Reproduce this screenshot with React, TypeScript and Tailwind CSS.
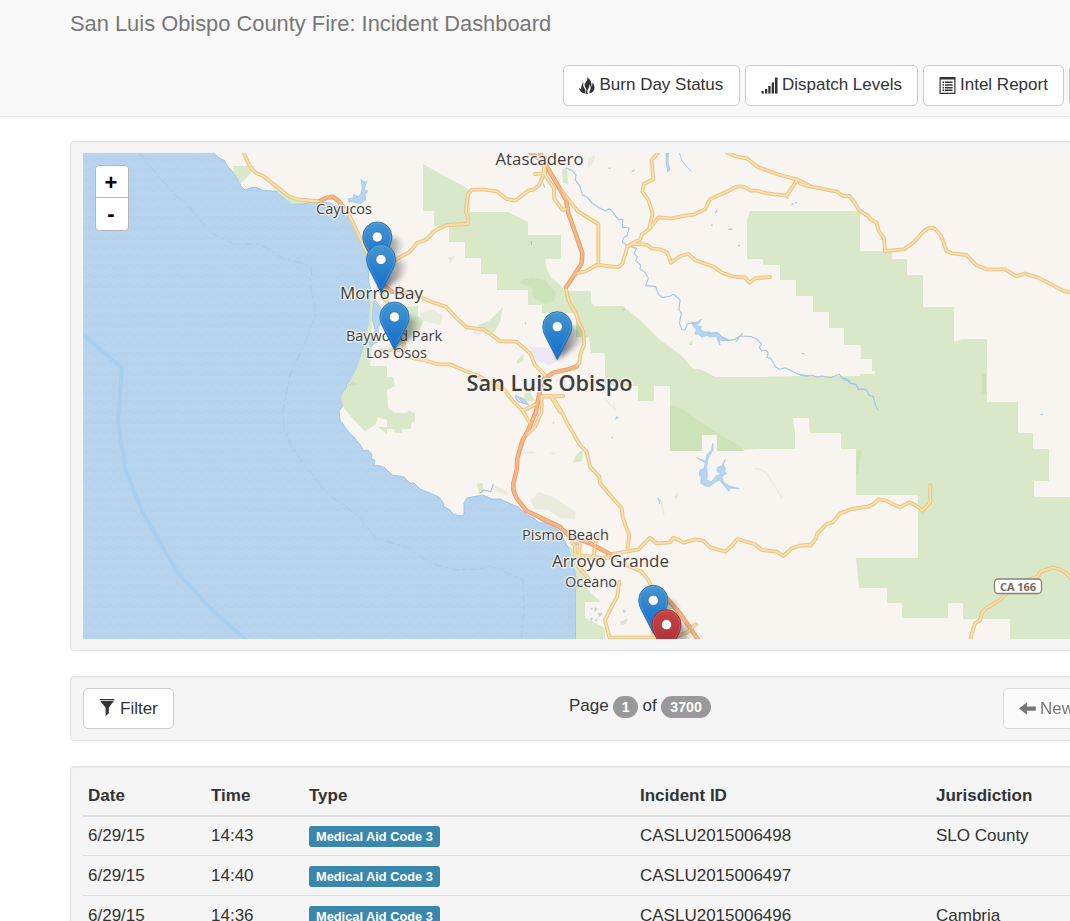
import React from 'react';

/* ---------- icons ---------- */

const FlameIcon = () => (
  <svg viewBox="0 0 17 17" className="h-[17px] w-[17px] shrink-0" fill="#333">
    <path d="M7.900 0C8.900 1.600 8.300 3 7.500 4.200 6.500 5.600 5.400 6.800 5.600 8.600 5.800 10.200 6.800 11 7.300 12.300 7.500 13.800 7.200 15.200 6.400 16.500 6.900 16.900 8.400 17 9.200 16.900 8.100 15.200 8 13.700 9 12.200 10.200 10.600 10.700 9.200 9.900 7.200 11.600 8.700 12.100 10.400 11.500 12.100 11 13.500 10 14.500 10.600 16.600 13.400 16 15.400 13.800 15.500 11 15.600 8.600 14.700 6.900 13 5.600 13.600 7.200 13.500 8.700 12.500 9.600 12.800 5.200 11.300 1.800 7.900 0Z" />
    <path d="M3.800 4.200C4.600 6 4.100 7.300 4.300 8.900 4.500 10.400 5.600 11.200 6.200 12.400 6.700 13.900 6.500 15.400 5.800 16.600 2.600 16 .3 14 0 11 .9 11.200 1.600 11.700 2.100 12.400 1.600 9.300 3.900 7.200 3.800 4.200Z" />
  </svg>
);

const SignalIcon = () => (
  <svg viewBox="0 0 17 17" className="h-[17px] w-[17px] shrink-0" fill="#333">
    <path d="M.5 14h2.300v2.500H.5zM4 12h2.300v4.500H4zM7.300 9h2.300v7.500H7.300zM10.700 5.500H13v11h-2.300zM14 .5h2.500v16H14z" />
  </svg>
);

const ListIcon = () => (
  <svg viewBox="0 0 17 17" className="h-[17px] w-[17px] shrink-0" fill="#333">
    <path fillRule="evenodd" d="M.5 0h16v17H.5zM1.700 2.500v13.300h13.600V2.500z" />
    <path d="M3.500 4.500H5V6H3.500zM6 4.500h7.500V6H6zM3.500 7.200H5v1.500H3.500zM6 7.200h7.500v1.500H6zM3.500 9.900H5v1.500H3.500zM6 9.900h7.500v1.500H6zM3.500 12.500H5V14H3.500zM6 12.500h7.500V14H6z" />
  </svg>
);

const FilterIcon = () => (
  <svg viewBox="0 0 17 17" className="-mt-[2px] h-[17px] w-[17px] shrink-0" fill="#333">
    <path d="M.8 0h14.500v1.200H.8zM1.200 2h13.700L9.800 8.500v5.800L6.600 17V8.500z" />
  </svg>
);

const ArrowIcon = () => (
  <svg viewBox="0 0 17 17" className="h-[17px] w-[17px] shrink-0" fill="#333">
    <path d="M0 8.500 8 2.300v4.100h8.800v4.300H8v4z" />
  </svg>
);

/* ---------- map data ---------- */

type TileKey = 'nw' | 'w' | 'n' | 'ne' | 'sw' | 's' | 'se';

const tiles: Record<TileKey, string> = {
  nw: 'translate(70 140) scale(.33333)',
  w: 'translate(300 140) scale(.33333)',
  n: 'translate(540 140) scale(.33333)',
  ne: 'translate(800 140) scale(.33333)',
  sw: 'translate(300 380) scale(.33333)',
  s: 'translate(540 380) scale(.33333)',
  se: 'translate(800 380) scale(.33333)',
};

type Road = [TileKey, string];

const roads: Road[] = [
  ['nw', 'M518 32 535 70 548 90 560 100 580 108 605 128 630 148 655 168 680 178 750 184'],
  ['w', 'M0 180 30 182 62 183'],
  ['w', 'M130 202 145 222 160 250 190 315 205 345'],
  ['w', 'M285 360 330 335 350 310 380 298 405 272 440 255 503 252 505 235 498 215 503 165 515 149 555 149 590 154 620 177 645 182 685 152 700 149 718 135 730 105 735 50'],
  ['w', 'M235 440 250 470 270 500M240 632 310 630 314 605'],
  ['w', 'M345 462 360 470 400 488 438 500 470 535 500 562 550 568 575 585 600 604 650 605 690 640 705 675 735 705 735 730'],
  ['w', 'M330 652 370 660 415 673 450 673 490 690 540 710 600 745'],
  ['n', 'M-15 102 15 100M15 80 15 105 42 145 42 175 68 210 85 205'],
  ['n', 'M22 80 60 145 90 185 115 215 175 252 175 372 135 395 108 400'],
  ['n', 'M175 375 235 382 248 370 262 320 285 305 300 300 305 285 330 265 355 232 395 235 430 228 460 224 495 208 510 178 550 160 590 140 610 140 635 152 650 152 680 160 740 167 770 122'],
  ['n', 'M560 38 590 50 620 55 655 82 720 105 770 118 810 138'],
  ['n', 'M355 38 335 60 340 118 312 132 307 155 325 180 338 220 328 265'],
  ['n', 'M275 312 320 314 335 325 360 328 380 337 387 350 393 368 420 348 445 342 465 360 520 380 545 398 580 410 615 412 628 428 645 415 690 411'],
  ['n', 'M78 445 85 480 92 495 110 525 115 545 130 575 132 615 122 640 118 670 100 685'],
  ['ne', 'M0 130 15 136 110 155 130 168 148 168 162 185 178 212 205 228 212 238 230 248 235 270 252 295 255 333 312 328 340 308 370 275 388 263 402 264 422 285 440 333 455 340 500 345 528 375 560 388 615 388 650 409 675 401 715 413 795 455 812 456'],
  ['se', 'M0 497 35 493 48 475 52 460 80 432 98 427 120 400 155 387 205 380 220 373 235 358 258 362 275 371 300 382 328 367 345 375 368 392 392 365 390 345 391 316'],
  ['se', 'M512 780 514 765 525 730 541 720 545 700 558 685 600 660 640 620 690 597 712 590 722 575 758 563 780 568 800 580 812 595'],
  ['s', 'M0 50 35 48 62 90 85 135 120 195 140 215 150 260 178 290 180 310 210 345 245 385 248 410 258 440 268 465 262 512'],
  ['s', 'M180 540 220 522 260 515 295 508 330 473 350 490 390 487 400 473 432 488 465 478 490 482 510 502 555 515 575 498 592 477 645 493 665 510 710 515 730 528 755 505 780 497 812 497'],
  ['s', 'M215 535 270 560 305 575 325 600 345 640'],
  ['s', 'M85 470 105 500 105 525 205 535M120 490 115 560 150 600M178 470 165 490 162 530'],
  ['s', 'M238 605 232 650 215 680 195 720 208 772 400 772 440 758 468 733'],
  ['sw', 'M592 10 610 25 640 65 668 92 690 130 685 160M668 92 710 72 720 50 790 48'],
  ['sw', 'M725 48 725 95 705 140 680 165M752 48 780 95'],
];

const highways: Road[] = [
  ['w', 'M60 183 80 173 98 170 115 182 130 202'],
  ['w', 'M250 435 275 455 340 462'],
  ['w', 'M692 38 725 62'],
  ['n', 'M0 38 20 80 50 130 78 180 85 220 110 290 127 340 125 370 105 402 78 442'],
  ['n', 'M110 680 85 688 40 698 10 718'],
  ['sw', 'M725 15 716 50 708 95 685 150 668 180 652 235 650 270 640 310 640 330 650 355 680 393 780 440'],
  ['s', 'M0 413 60 442 85 465 150 490 215 525'],
  ['s', 'M380 655 420 700 475 780'],
];

type Label = { x: number; y: number; text: string; size: number; width: number; bold?: boolean };

const labels: Label[] = [
  { x: 539.5, y: 164.500, text: 'Atascadero', size: 16.8, width: 88 },
  { x: 344, y: 214, text: 'Cayucos', size: 14.4, width: 56 },
  { x: 381.500, y: 299, text: 'Morro Bay', size: 16.8, width: 83 },
  { x: 394, y: 341, text: 'Baywood Park', size: 14.4, width: 96 },
  { x: 396.500, y: 357.500, text: 'Los Osos', size: 14.4, width: 61 },
  { x: 549.500, y: 391, text: 'San Luis Obispo', size: 22, width: 166, bold: true },
  { x: 565.500, y: 539.500, text: 'Pismo Beach', size: 14.4, width: 87 },
  { x: 610.500, y: 567, text: 'Arroyo Grande', size: 16.8, width: 117 },
  { x: 591, y: 587, text: 'Oceano', size: 14.4, width: 52 },
];

const Strokes = ({ items, className, width }: { items: Road[]; className: string; width: number }) => (
  <g fill="none" className={className} strokeWidth={width} strokeLinecap="round" strokeLinejoin="round">
    {items.map(([tile, d], i) => (
      <path key={i} transform={tiles[tile]} d={d} />
    ))}
  </g>
);

type Pin = { x: number; y: number; red?: boolean };

const pins: Pin[] = [
  { x: 377.3, y: 222 },
  { x: 381, y: 244.5 },
  { x: 394.5, y: 302 },
  { x: 557.3, y: 311.7 },
  { x: 653.3, y: 585.3 },
  { x: 666.5, y: 609.7, red: true },
];

const PinShadow = ({ x, y }: Pin) => (
  <path
    transform={`translate(${x} ${y})`}
    d="M0 48 2 18Q12 12 22 17Q28 22 19 34Z"
    fill="url(#shade)"
    filter="url(#soft)"
  />
);

const Marker = ({ x, y, red }: Pin) => (
  <g transform={`translate(${x} ${y})`}>
    <path
      d="M0 48-12.500 23.500C-14 20-14.500 17.500-14.500 14.500A14.500 14.500 0 0 1 14.500 14.500C14.500 17.500 14 20 12.500 23.500Z"
      fill={red ? 'url(#pinRed)' : 'url(#pinBlue)'}
      stroke={red ? '#982e35' : '#2e6fa6'}
      strokeWidth=".9"
    />
    <path
      d="M0 44-11.500 23C-13 20-13.400 17.500-13.400 14.500A13.400 13.400 0 0 1 13.400 14.500C13.400 17.500 13 20 11.500 23Z"
      fill="none"
      stroke="#fff"
      strokeOpacity=".13"
    />
    <circle cx="0" cy="15" r="5.100" fill="#fff" stroke={red ? '#982e35' : '#2e6fa6'} strokeWidth=".7" />
  </g>
);

const IncidentMap = () => (
  <svg
    viewBox="83 153 987 486"
    className="block h-[486px] w-[987px]"
    fontFamily="'Open Sans', 'Noto Sans', sans-serif"
  >
    <defs>
      <pattern id="waves" x="83" y="155" width="9.700" height="9.700" patternUnits="userSpaceOnUse">
        <path d="M0 4Q2.400 7 4.850 4T9.700 4" transform="translate(0 1)" fill="none" stroke="#a9cbea" strokeWidth="1" />
      </pattern>
      <linearGradient id="pinBlue" x1="0" y1="0" x2="0" y2="1">
        <stop offset="0" stopColor="#4597d0" />
        <stop offset="1" stopColor="#0e69cb" />
      </linearGradient>
      <linearGradient id="pinRed" x1="0" y1="0" x2="0" y2="1">
        <stop offset="0" stopColor="#c94444" />
        <stop offset="1" stopColor="#9f2832" />
      </linearGradient>
      <linearGradient id="shade" x1=".2" y1="0" x2="1" y2="0">
        <stop offset="0" stopColor="#222" stopOpacity=".6" />
        <stop offset="1" stopColor="#222" stopOpacity=".12" />
      </linearGradient>
      <filter id="soft" x="-40%" y="-40%" width="180%" height="180%">
        <feGaussianBlur stdDeviation="2.500" />
      </filter>
    </defs>

    <rect x="83" y="153" width="987" height="486" fill="#b7d4ee" />
    <rect x="83" y="153" width="987" height="486" fill="url(#waves)" opacity=".45" />
    <path d="M81 333 122 368 118 421 125 468 142 511 177 572 211 609 246 640" fill="none" stroke="#a9cff0" strokeWidth="4" strokeLinejoin="round" />
    <path
      d="M139 153 175 195 186 203 211 233 234 244 260 244 284 259 307 264 312 269 310 283 316 313 307 338 290 375 283 410 284 428 291 446 303 464 311 472 325 492 357 515 376 538 406 547 430 563 455 570 480 569 490 566 523 580 524 610 521 640"
      fill="none"
      stroke="#a3caec"
      strokeWidth="1"
      strokeOpacity=".85"
      strokeDasharray="9 3 3 3"
    />

    <path
      d="M214 145 214 153 219 158 224 160 228 167 232 171 238 179 241 186 245 190 250 188 255 187 262 190 272 191 280 191 290 201 293 204 303 204 310 202 320 202 330 203 340 208 347 214 352 223 357 232 362 245 366 252 368 268 369 283 371 290 372 310 369 325 365 340 362 352 358 365 352 378 347 384 346 390 344 393 341 395 343 401 342 407 339 411 340 420 345 427 350 434 354 437 361 446 363 451 368 450 372 455 371 459 375 460 374 465 380 466 385 468 392 475 404 477 410 483 414 483 420 489 432 494 439 497 444 504 443 506 450 510 453 514 460 516 464 515 464 503 467 498 472 497 483 495 492 499 500 499 511 504 518 507 527 515 534 518 539 523 549 523 560 532 565 542 571 552 575 568 576 590 576 605 576 620 575 650 1080 650 1080 145Z"
      fill="#f8f4f0"
      stroke="#98c1e6"
      strokeWidth=".9"
    />

    <g fill="#d8e8c8">
      <path d="M234 166H255L250 174 240 184 238 179 233 172ZM272 187 280 191 294 198 310 202 292 204Z" />
      <path d="M423 164 470 190V212H508L528 222V235H561V259H545L547 270 552 279 557 282 566 291H591V303L595 306H623L640 320 660 340 682 356 692 368 702 370 715 377H760L800 376H860V374H875V371H872V359H861V345H844V328H829V312H813V296H796V280H780V265H763V259H747V220L750 211H860V251H892V259H907V275H923V307H954V342L962 339H987V402H1018V433H1033V449H1049V481H1034V497H1070V639H1010V619H963V603H948V618H902V603H887V588H859L856 558H918V495H856V449H841V433H810L809 418H793L795 433V449L760 449 717 451V435H702V451H670V386H654V401H638V386H605V353H591L589 337H576V313H542V305H528V290H497V274H481V258H465V242H449V227H434V211H423Z" />
      <path d="M364 346 370 340 372 350 370 366H387V377H393L395 386 387 390 388 408 395 413H407L409 410 415 414V421L411 423V429H402V433H395L394 429H387V434L378 427H387V420L378 417 376 424 365 431 354 420 343 407 341 396 347 387 357 367Z" />
      <path d="M371 290H374V305L372 325 370 340 364 342 369 322ZM399 307 418 306V316L424 320 418 333 408 340 404 330ZM477 326 490 320 503 307 500 322 493 333ZM576 570 583 572 588 590 601 602H585V618L605 628V639H576ZM568 545 574 550 578 570 575 570ZM477 484 482 483 484 492 479 494ZM583 450 582 461 574 463 573 460 578 453ZM562 170 567 167 568 184 563 183ZM652 628 657 625 657 639 650 639ZM690 342 693 340 692 345 689 345ZM674 497 678 492 677 499ZM517 360 524 354 523 361 517 364ZM524 394 530 392 535 401 525 401ZM620 622 628 618 626 624 621 625Z" />
    </g>
    <g fill="#cce2b8">
      <path d="M520 283 522 280 532 278 545 280 556 293 554 301 545 303 536 300 532 293 533 289ZM670 405 682 409 712 430 740 446 744 451 717 451V435H702V451H670ZM856 451 862 450 860 460 858 475 856 475ZM982 374H986V393H982ZM576 322 588 338 576 337ZM347 386 352 381 360 385Z" />
    </g>
    <g fill="#e9ecdd">
      <path d="M530 500 534 497 538 492 548 495 555 498 562 503 576 512 575 519 560 518 548 510 535 509ZM494 485 508 492 507 496 492 489ZM420 313 433 309 443 316 440 325 421 320ZM448 257 455 256 450 265ZM522 453 533 451 535 454ZM588 158 595 155 594 162 588 168ZM549 453 556 452 554 455Z" />
    </g>
    <g fill="none" stroke="#e9eedc" strokeWidth="1.500">
      <path d="M755 469Q762 468 768 475L782 498M604 398 615 410 614 404M661 500 664 515" />
    </g>
    <g fill="#ece6f5">
      <path d="M530 347 551 348 558 360 550 365 540 362 532 356ZM474 329 482 330 480 335 473 334ZM555 380 564 377 566 386ZM698 636 704 633 702 639Z" />
    </g>

    <g fill="#b5d4f0" stroke="#a0c5ea" strokeWidth=".7">
      <path d="M361 179 364 182 367 181 364 190 368 191 365 195 366 199 361 204 354 202 349 202 348 199 353 198 354 194 358 197 361 193 362 188Z" />
      <path d="M374 298 378 304 384 312 381 322 378 330 381 340 374 344 371 347 369 344 375 330 372 318ZM515 395 524 399 529 405 523 403ZM576 542 580 544 574 546Z" />
      <path transform={tiles.s} strokeWidth="2" d="M518 190 520 208 510 225 503 240 500 262 502 285 500 300 515 306 528 288 542 282 530 273 533 262 545 258 556 238 550 255 558 265 552 275 560 280 545 290 552 308 568 318 598 326 570 324 566 334 555 320 538 300 518 312 508 320 495 318 482 310 484 290 477 285 480 270 492 265 496 248 470 233 497 243 500 225 515 210Z" />
      <path transform={tiles.n} strokeWidth="2" d="M455 545 468 548 485 537 478 550 465 556 485 560 480 568 495 576 510 575 506 580 532 580 540 588 550 592 565 598 548 603 538 598 540 615 533 600 530 588 512 592 500 586 485 592 475 582 464 582 470 570 460 560ZM378 38H386L384 65 390 90 383 95 378 70Z" />
      <path transform={tiles.s} d="M230 108 237 115 226 118ZM352 352 362 360 358 372ZM152 685 158 683 156 690ZM165 680 172 688 164 694ZM175 700 188 698 178 712ZM150 715 158 714 155 724ZM165 720 172 715 168 726ZM248 690 258 692 252 700Z" />
    </g>
    <g fill="none" stroke="#a3c7ea" strokeWidth="3.400" strokeLinejoin="round">
      <path transform={tiles.n} d="M78 83 98 92 108 105 106 120 120 140 127 165 140 170 155 188 175 202 198 213 207 205 220 218 235 240 248 237 247 262 267 264 262 285 250 295 247 307 262 315 272 320 290 325 282 340 292 350 287 362 302 375 300 388 315 397 325 415 317 437 347 440 354 460 365 472 385 470 402 463 420 480 417 510 424 520 418 550 425 568 435 570 442 552 470 548" />
      <path transform={tiles.n} d="M500 582 530 577 560 602 585 598 600 588 635 590 650 597 665 612 658 622 665 633 678 630 685 640 680 652 692 655 708 682 720 688 735 683 760 695 775 703 810 708M588 605 600 588 608 580" />
      <path transform={tiles.n} d="M418 38 425 60 440 80 455 95" strokeWidth="2.500" />
      <path transform={tiles.ne} d="M0 705 20 709 35 705 50 711 65 708 92 713 118 703 128 716 140 715 147 728 168 734 175 748 200 748" />
      <path transform={tiles.se} d="M130 0 148 2 152 10 168 14 177 28 193 27 202 34 207 46 220 50 225 72 235 92" />
      <path transform={tiles.sw} d="M540 340 550 330 572 335 580 312M540 340 545 334M645 50 655 65 680 72" />
      <path transform={tiles.n} d="M525 220 532 210M275 95 284 90M755 195 760 190M785 640 795 643M565 268 578 267M594 317 600 317M250 511 254 508M206 85 212 84M512 255 518 256M742 176 746 173M766 190 771 187" />
      <path transform={tiles.se} d="M722 104 728 103" />
      <path transform={tiles.s} d="M215 172 219 173M39 127 41 130" />
      <path transform={tiles.w} d="M694 303 695 315M676 548 677 552M730 130 734 143" />
    </g>

    <Strokes items={roads} className="stroke-[#e8c48c]" width={11.5} />
    <Strokes items={highways} className="stroke-[#e0a070]" width={13.5} />
    <Strokes items={roads} className="stroke-[#fae0a4]" width={5.5} />
    <Strokes items={highways} className="stroke-[#f9b680]" width={8} />

    <g textAnchor="middle" stroke="#f8f4f0" strokeOpacity=".9" strokeWidth="2.500" strokeLinejoin="round" paintOrder="stroke" fill="#3e3e40">
      {labels.map((l) => (
        <text
          key={l.text}
          x={l.x}
          y={l.y}
          fontSize={l.size}
          fontWeight={l.bold ? 600 : 400}
          textLength={l.width}
          lengthAdjust="spacingAndGlyphs"
        >
          {l.text}
        </text>
      ))}
    </g>
    <rect x="994.500" y="579" width="47" height="14.500" rx="3.500" fill="#fff" stroke="#87817a" strokeWidth="1.300" />
    <text x="1018" y="590.700" textAnchor="middle" fontSize="11" fontWeight="700" fill="#7a6a5c" textLength="36">
      CA 166
    </text>

    {pins.map((p) => (
      <PinShadow key={p.y} {...p} />
    ))}
    {pins.map((p) => (
      <Marker key={p.y} {...p} />
    ))}
  </svg>
);

/* ---------- page ---------- */

const ToolbarButton = ({ className, icon, children }: { className: string; icon?: React.ReactNode; children?: React.ReactNode }) => (
  <button
    className={`flex h-[41px] shrink-0 items-center rounded-[5px] border border-[#ccc] bg-white pl-[15px] text-[17px] whitespace-nowrap text-[#333] ${className}`}
  >
    {icon}
    <span className="pl-1">{children}</span>
  </button>
);

const Well = ({ className, children }: { className: string; children: React.ReactNode }) => (
  <section
    className={`w-[1165px] rounded-[4px] border border-[#e3e3e3] bg-[#f5f5f5] shadow-[inset_0_1px_1px_rgba(0,0,0,0.05)] ${className}`}
  >
    {children}
  </section>
);

const incidents = [
  { date: '6/29/15', time: '14:43', type: 'Medical Aid Code 3', id: 'CASLU2015006498', area: 'SLO County' },
  { date: '6/29/15', time: '14:40', type: 'Medical Aid Code 3', id: 'CASLU2015006497', area: '' },
  { date: '6/29/15', time: '14:36', type: 'Medical Aid Code 3', id: 'CASLU2015006496', area: 'Cambria' },
];

export default function App() {
  return (
    <div className="h-[921px] w-full overflow-hidden bg-white font-['Liberation_Sans',Arial,sans-serif] text-[17px] text-[#333]">
      <header className="h-[117px] border-b border-[#e7e7e7] bg-[#f8f8f8]">
        <h1 className="h-[64.5px] pt-[9px] pl-[70px] text-[21.87px] leading-[30px] text-[#777]">
          San Luis Obispo County Fire: Incident Dashboard
        </h1>
        <nav className="flex gap-[5px] overflow-hidden pl-[562.5px]">
          <ToolbarButton className="w-[177.5px]" icon={<FlameIcon />}>Burn Day Status</ToolbarButton>
          <ToolbarButton className="w-[173px]" icon={<SignalIcon />}>Dispatch Levels</ToolbarButton>
          <ToolbarButton className="w-[141px]" icon={<ListIcon />}>Intel Report</ToolbarButton>
          <ToolbarButton className="w-[120px]" />
        </nav>
      </header>

      <main className="flex flex-col gap-[25px] pt-6 pl-[70px]">
        <Well className="h-[510px] pt-[11px] pl-3">
          <div className="relative w-[987px]">
            <IncidentMap />
            <div className="absolute top-3 left-3 flex w-[34px] flex-col overflow-hidden rounded-[4px] border border-[#b3b8bd] bg-white pr-[2px] text-center font-['Liberation_Sans',sans-serif] text-[22px] font-bold text-black">
              <button className="-mr-[2px] h-8 border-b border-[#bbb] pr-[2px] leading-[33px]">+</button>
              <button className="h-8 leading-8">-</button>
            </div>
          </div>
        </Well>

        <Well className="flex h-[65px] items-start pt-[11px] pl-3">
          <ToolbarButton className="w-[91px]" icon={<FilterIcon />}>Filter</ToolbarButton>
          <p className="ml-[395px] flex w-[434px] items-center gap-[4.5px] pt-[6px] text-[17px] leading-6">
            Page
            <span className="mt-[2px] rounded-full bg-[#999] px-[8.5px] text-[14.2px] leading-[22px] font-bold text-white">1</span>
            of
            <span className="mt-[2px] rounded-full bg-[#999] px-[9px] text-[14.2px] leading-[22px] font-bold text-white">3700</span>
          </p>
          <ToolbarButton className="w-[120px] opacity-65" icon={<ArrowIcon />}>Newer</ToolbarButton>
        </Well>

        <Well className="h-[300px] pt-[11px] pl-3">
          <table className="w-[1140px] table-fixed text-left">
            <colgroup>
              <col className="w-[123px]" />
              <col className="w-[98px]" />
              <col className="w-[331px]" />
              <col className="w-[296px]" />
              <col />
            </colgroup>
            <thead>
              <tr className="h-[37.5px] border-b-2 border-[#ddd]">
                {['Date', 'Time', 'Type', 'Incident ID', 'Jurisdiction'].map((h) => (
                  <th key={h} className="px-[5px] leading-6 font-bold">{h}</th>
                ))}
              </tr>
            </thead>
            <tbody>
              {incidents.map((r) => (
                <tr key={r.id} className="h-10 border-b border-[#ddd] leading-6">
                  <td className="px-[5px]">{r.date}</td>
                  <td className="px-[5px]">{r.time}</td>
                  <td className="px-[5px]">
                    <span className="mt-[2px] block w-fit rounded-[3px] bg-[#3a87ad] px-[7px] text-[12.8px] leading-[21px] font-bold whitespace-nowrap text-white">
                      {r.type}
                    </span>
                  </td>
                  <td className="px-[5px]">{r.id}</td>
                  <td className="px-[5px]">{r.area}</td>
                </tr>
              ))}
            </tbody>
          </table>
        </Well>
      </main>
    </div>
  );
}
